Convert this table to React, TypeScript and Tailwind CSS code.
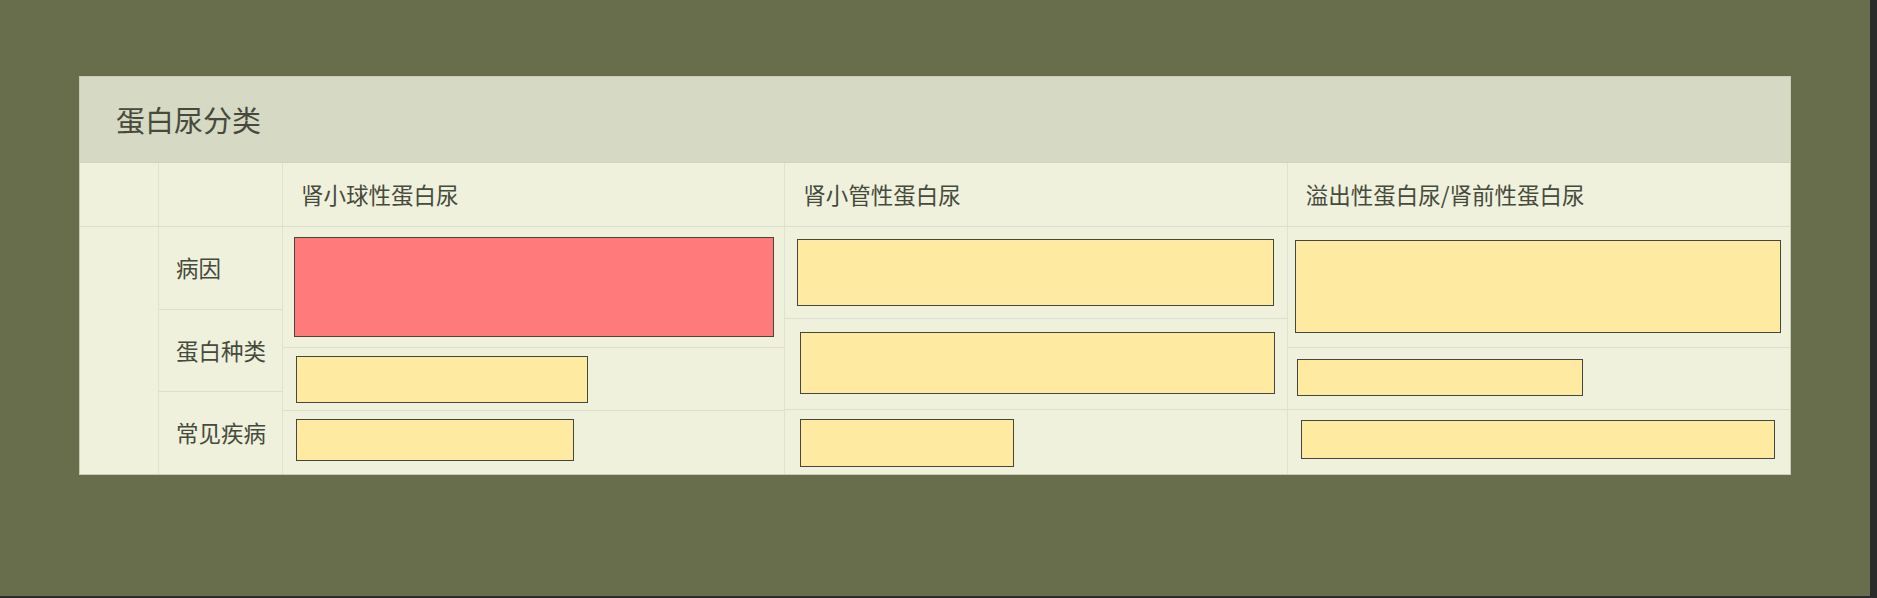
import React from 'react';

type Box = { left: number; top: number; w: number; h: number; red?: boolean };
type Cell = { h: number; box: Box };

// Box sizes taken from the layout of each column
const columns: { title: string; cells: Cell[] }[] = [
  {
    title: '肾小球性蛋白尿',
    cells: [
      { h: 120, box: { left: 11, top: 10, w: 480, h: 100, red: true } },
      { h: 63, box: { left: 13, top: 8, w: 292, h: 47 } },
      { h: 64, box: { left: 13, top: 8, w: 278, h: 42 } },
    ],
  },
  {
    title: '肾小管性蛋白尿',
    cells: [
      { h: 91, box: { left: 12, top: 12, w: 477, h: 67 } },
      { h: 91, box: { left: 15, top: 13, w: 475, h: 62 } },
      { h: 65, box: { left: 15, top: 9, w: 214, h: 48 } },
    ],
  },
  {
    title: '溢出性蛋白尿/肾前性蛋白尿',
    cells: [
      { h: 120, box: { left: 7, top: 13, w: 486, h: 93 } },
      { h: 62, box: { left: 9, top: 11, w: 286, h: 37 } },
      { h: 65, box: { left: 13, top: 10, w: 474, h: 39 } },
    ],
  },
];

const labels = ['病因', '蛋白种类', '常见疾病'];

export default function App() {
  return (
    <div
      className="flex h-[598px] w-[1877px] bg-[#2b2b2b]"
      style={{ fontFamily: '"Noto Sans CJK SC", "Noto Sans", sans-serif' }}
    >
      <div className="h-[596px] w-[1870px] bg-[#686d4c] pl-[79px] pt-[76px]">
        <div className="w-[1712px] border border-[#c9ccb5] bg-[#eff1dc] text-[#464a3c]">
          {/* Header */}
          <div className="flex h-[86px] items-center border-b border-[#d0d3bf] bg-[#d6d9c4] pl-[36px] text-[29px]">
            蛋白尿分类
          </div>

          {/* Column headers */}
          <div className="grid grid-cols-[79px_124px_1fr_1fr_1fr] border-b border-[#dcdfcb] text-[22.5px]">
            <div className="h-[63px] border-r border-[#dfe2cf]" />
            <div className="h-[63px] border-r border-[#dfe2cf]" />
            {columns.map((col, i) => (
              <div
                key={col.title}
                className={`flex h-[63px] items-center pl-[18px] ${i < 2 ? 'border-r border-[#dfe2cf]' : ''}`}
              >
                {col.title}
              </div>
            ))}
          </div>

          {/* Body */}
          <div className="grid grid-cols-[79px_124px_1fr_1fr_1fr] text-[22.5px]">
            <div className="border-r border-[#dfe2cf]" />
            <div className="flex flex-col border-r border-[#dfe2cf]">
              {labels.map((label, i) => (
                <div
                  key={label}
                  className={`flex flex-1 items-center pl-[17px] ${i > 0 ? 'border-t border-[#dcdfcb]' : ''}`}
                >
                  {label}
                </div>
              ))}
            </div>
            {columns.map((col, i) => (
              <div key={col.title} className={`flex flex-col ${i < 2 ? 'border-r border-[#dfe2cf]' : ''}`}>
                {col.cells.map((cell, j) => (
                  <div
                    key={j}
                    className={j > 0 ? 'border-t border-[#dcdfcb]' : ''}
                    style={{ height: cell.h }}
                  >
                    <div
                      className={`border border-[#45463c] ${cell.box.red ? 'bg-[#ff7b7b]' : 'bg-[#ffeaa2]'}`}
                      style={{
                        marginLeft: cell.box.left,
                        marginTop: cell.box.top,
                        width: cell.box.w,
                        height: cell.box.h,
                      }}
                    />
                  </div>
                ))}
              </div>
            ))}
          </div>
        </div>
      </div>
    </div>
  );
}
